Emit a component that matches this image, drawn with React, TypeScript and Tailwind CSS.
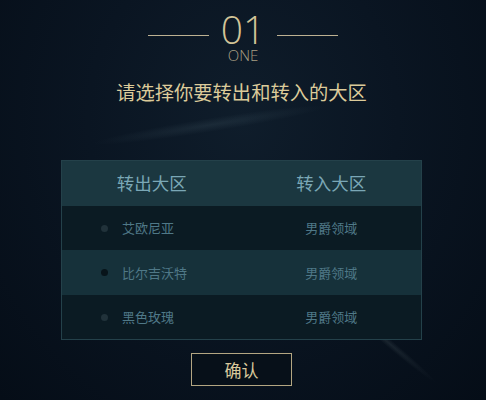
import React from "react";

const rows = [
  { from: "艾欧尼亚", to: "男爵领域", dark: true, h: "h-[44px]", dot: "bg-[#21323a]" },
  { from: "比尔吉沃特", to: "男爵领域", dark: false, h: "h-[45px]", dot: "bg-[#08141a]" },
  { from: "黑色玫瑰", to: "男爵领域", dark: true, h: "h-[44px]", dot: "bg-[#21323a]" },
];

const cjk = { fontFamily: '"Noto Sans CJK SC", "Noto Sans", sans-serif' };
const latin = { fontFamily: '"Open Sans", "Liberation Sans", sans-serif' };

export default function App() {
  return (
    <div
      className="relative w-[486px] h-[400px] overflow-hidden bg-[radial-gradient(ellipse_at_50%_30%,#0f1d2b_0%,#0a1522_45%,#050d17_100%)]"
      style={cjk}
    >
      {/* faint light streaks */}
      <div className="pointer-events-none absolute left-[90px] top-[118px] w-[240px] h-[14px] -rotate-[9deg] bg-[radial-gradient(ellipse_at_center,rgba(120,150,160,0.12),transparent_70%)]" />
      <div className="pointer-events-none absolute left-[330px] top-[340px] w-[120px] h-[8px] rotate-[40deg] bg-[radial-gradient(ellipse_at_center,rgba(150,170,170,0.12),transparent_70%)]" />

      <div className="relative flex flex-col items-center">
        <div className="mt-[11px] flex items-start gap-[12px]">
          <div className="mt-[24px] w-[61px] h-px bg-[#bdb192]" />
          <div className="text-[39px] leading-[36px] font-light text-[#d2c497]" style={latin}>
            01
          </div>
          <div className="mt-[24px] w-[61px] h-px bg-[#bdb192]" />
        </div>
        <div className="text-[15px] leading-[16px] font-light text-[#a89f84]" style={latin}>
          ONE
        </div>
        <div className="mt-[17px] mr-[3px] text-[19.3px] leading-[24px] text-[#dccb9a]">
          请选择你要转出和转入的大区
        </div>

        <div className="mt-[56px] mr-[3px] w-[361px] border border-[#24414a] bg-[#0b1a22]">
          <div className="flex h-[45px] items-center bg-[#1b3740] text-[17.5px] text-[#7aa7b6]">
            <div className="w-1/2 text-center">转出大区</div>
            <div className="w-1/2 text-center">转入大区</div>
          </div>
          {rows.map((r) => (
            <div
              key={r.from}
              className={`flex ${r.h} items-center text-[13px] ${
                r.dark ? "bg-[#0b1b23]" : "bg-[#16313a]"
              }`}
            >
              <div className="w-1/2 flex items-center pl-[39px] text-[#4f7887]">
                <span className={`w-[7px] h-[7px] rounded-full ${r.dot}`} />
                <span className="ml-[14px]">{r.from}</span>
              </div>
              <div className="w-1/2 text-center text-[#4f7887]">{r.to}</div>
            </div>
          ))}
        </div>

        <button className="mt-[13px] mr-[3px] w-[101px] h-[33px] border border-[#b3a682] bg-[#071019] text-[17px] text-[#d8c89c]">
          确认
        </button>
      </div>
    </div>
  );
}
